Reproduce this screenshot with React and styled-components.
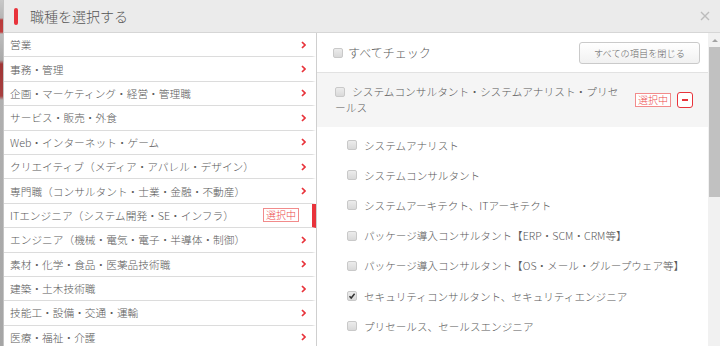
import React from 'react'
import styled, { createGlobalStyle } from 'styled-components'

const GlobalStyle = createGlobalStyle`
  html, body {
    margin: 0;
    padding: 0;
  }
  body {
    width: 720px;
    height: 346px;
    overflow: hidden;
    background: #9a9a9a;
    font-family: "Noto Sans CJK JP", "Noto Sans", sans-serif;
    font-weight: 300;
    color: #5a5a5a;
  }
`

const RED = '#e8333b'

const Page = styled.div`
  display: flex;
  width: 720px;
  height: 346px;
`

const BackStrip = styled.div`
  width: 3px;
  background: linear-gradient(
    #c8c8c8 0px, #b5b5b5 18px, #b83a3a 20px, #c04040 32px,
    #bdbdbd 34px, #a9a9a9 60px, #a03535 64px, #a84040 96px,
    #b0b0b0 100px, #a5a5a5 346px
  );
`

const Modal = styled.div`
  flex: 1;
  display: flex;
  flex-direction: column;
  background: #fff;
  border-left: 1px solid #c4c4c4;
  min-width: 0;
`

const Header = styled.div`
  height: 32px;
  flex-shrink: 0;
  display: flex;
  align-items: center;
  padding: 0 10px;
  background: #ebebeb;
  border-bottom: 1px solid #d6d6d6;
`

const HeaderBar = styled.span`
  width: 4px;
  height: 17px;
  border-radius: 2px;
  background: ${RED};
`

const Title = styled.h1`
  flex: 1;
  margin: 0 0 0 12px;
  font-size: 14px;
  font-weight: 300;
  color: #555;
`

const CloseIcon = () => (
  <svg width="10" height="10" viewBox="0 0 10 10">
    <path d="M1 1L9 9M9 1L1 9" stroke="#bcbcbc" strokeWidth="1.4" />
  </svg>
)

const Body = styled.div`
  flex: 1;
  display: flex;
  min-height: 0;
`

const LeftCol = styled.div`
  width: 312px;
  flex-shrink: 0;
  border-right: 1px solid #cfcfcf;
  overflow: hidden;
`

const CatRow = styled.div`
  height: 23.4px;
  display: flex;
  align-items: center;
  padding: 0 ${p => (p.$active ? 13 : 6)}px 0 6px;
  border-bottom: 1px solid #dcdcdc;
  border-right: 4px solid ${p => (p.$active ? RED : 'transparent')};
  font-size: 10.7px;
  white-space: nowrap;
`

const CatLabel = styled.span`
  flex: 1;
`

const Badge = styled.span`
  display: inline-flex;
  align-items: center;
  justify-content: center;
  height: 12px;
  padding: 0 2px;
  border: 1px solid #f28b8b;
  color: #ec4a4a;
  font-size: 10px;
  line-height: 1;
  background: #fff;
`

const Chevron = () => (
  <svg width="5" height="8" viewBox="0 0 5 8">
    <path d="M1 1L4 4L1 7" fill="none" stroke={RED} strokeWidth="1.7" />
  </svg>
)

const RightCol = styled.div`
  flex: 1;
  display: flex;
  flex-direction: column;
  min-width: 0;
  overflow: hidden;
`

const TopRow = styled.div`
  height: 39px;
  flex-shrink: 0;
  display: flex;
  align-items: center;
  padding: 0 8px 0 16px;
  border-bottom: 1px solid #e2e2e2;
`

const CheckLabel = styled.label`
  flex: 1;
  display: flex;
  align-items: center;
  gap: 5px;
  font-size: 12px;
`

const CloseAllButton = styled.button`
  width: 121px;
  height: 22px;
  border: 1px solid #cacaca;
  border-radius: 3px;
  background: linear-gradient(#ffffff, #f1f1f1);
  font-family: inherit;
  font-weight: 300;
  font-size: 9.2px;
  color: #666;
  padding: 0;
`

const Box = styled.span`
  display: inline-block;
  flex-shrink: 0;
  width: 8px;
  height: 8px;
  border: 1px solid #c9c9c9;
  border-radius: 2px;
  background: linear-gradient(#ececec, #d9d9d9);
  vertical-align: -1px;
  margin-right: ${p => p.$mr || 0}px;
`

const CheckMark = () => (
  <svg width="8" height="8" viewBox="0 0 8 8" style={{ display: 'block' }}>
    <path d="M1.5 4.2L3.2 6L6.6 1.8" fill="none" stroke="#333" strokeWidth="1.5" />
  </svg>
)

const Group = styled.div`
  display: flex;
  align-items: center;
  padding: 11px 15px;
  background: #f5f5f5;
`

const GroupText = styled.div`
  flex: 1;
  font-size: 10.7px;
  line-height: 16px;
  padding-left: 3px;
`

const GroupTools = styled.div`
  display: flex;
  align-items: center;
  gap: 6px;
  margin-left: 12px;
`

const MinusButton = styled.span`
  display: inline-flex;
  align-items: center;
  justify-content: center;
  width: 14px;
  height: 14px;
  border: 1.5px solid ${RED};
  border-radius: 3px;
  background: #fff;
  &::after {
    content: '';
    width: 6px;
    height: 2px;
    background: ${RED};
  }
`

const ItemList = styled.div`
  padding-top: 3px;
`

const Item = styled.label`
  height: 30.2px;
  display: flex;
  align-items: center;
  padding-left: 30px;
  gap: 7px;
  font-size: 10.6px;
  white-space: nowrap;
`

const ScrollBar = styled.div`
  width: 12px;
  flex-shrink: 0;
  display: flex;
  flex-direction: column;
  background: #f1f1f1;
`

const ScrollArrow = styled.div`
  height: 14px;
  display: flex;
  justify-content: center;
  align-items: center;
  &::after {
    content: '';
    border-left: 3px solid transparent;
    border-right: 3px solid transparent;
    border-bottom: 3px solid #a3a3a3;
    margin-left: 1px;
  }
`

const ScrollThumb = styled.div`
  height: 150px;
  margin-left: 1px;
  background: #c1c1c1;
`

const categories = [
  '営業',
  '事務・管理',
  '企画・マーケティング・経営・管理職',
  'サービス・販売・外食',
  'Web・インターネット・ゲーム',
  'クリエイティブ（メディア・アパレル・デザイン）',
  '専門職（コンサルタント・士業・金融・不動産）',
  'ITエンジニア（システム開発・SE・インフラ）',
  'エンジニア（機械・電気・電子・半導体・制御）',
  '素材・化学・食品・医薬品技術職',
  '建築・土木技術職',
  '技能工・設備・交通・運輸',
  '医療・福祉・介護',
]

const items = [
  { label: 'システムアナリスト' },
  { label: 'システムコンサルタント' },
  { label: 'システムアーキテクト、ITアーキテクト' },
  { label: 'パッケージ導入コンサルタント【ERP・SCM・CRM等】' },
  { label: 'パッケージ導入コンサルタント【OS・メール・グループウェア等】' },
  { label: 'セキュリティコンサルタント、セキュリティエンジニア', checked: true },
  { label: 'プリセールス、セールスエンジニア' },
]

export default function App() {
  const activeIndex = 7

  return (
    <Page>
      <GlobalStyle />
      <BackStrip />
      <Modal>
        <Header>
          <HeaderBar />
          <Title>職種を選択する</Title>
          <CloseIcon />
        </Header>

        <Body>
          <LeftCol>
            {categories.map((name, i) => (
              <CatRow key={name} $active={i === activeIndex}>
                <CatLabel>{name}</CatLabel>
                {i === activeIndex ? <Badge>選択中</Badge> : <Chevron />}
              </CatRow>
            ))}
          </LeftCol>

          <RightCol>
            <TopRow>
              <CheckLabel>
                <Box />
                すべてチェック
              </CheckLabel>
              <CloseAllButton>すべての項目を閉じる</CloseAllButton>
            </TopRow>

            <Group>
              <GroupText>
                <Box $mr={7} />
                システムコンサルタント・システムアナリスト・プリセールス
              </GroupText>
              <GroupTools>
                <Badge>選択中</Badge>
                <MinusButton />
              </GroupTools>
            </Group>

            <ItemList>
              {items.map(item => (
                <Item key={item.label}>
                  <Box>{item.checked && <CheckMark />}</Box>
                  {item.label}
                </Item>
              ))}
            </ItemList>
          </RightCol>

          <ScrollBar>
            <ScrollArrow />
            <ScrollThumb />
          </ScrollBar>
        </Body>
      </Modal>
    </Page>
  )
}
